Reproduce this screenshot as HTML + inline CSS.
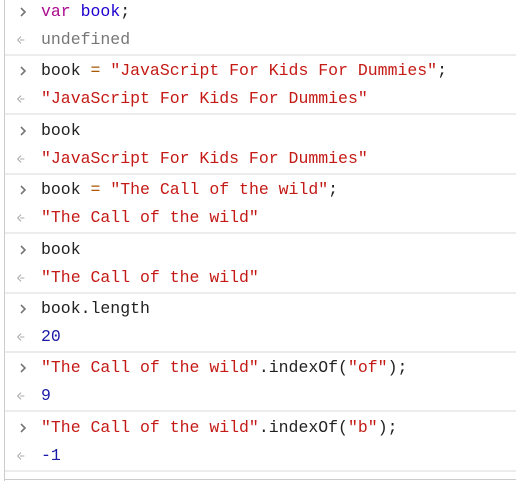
<!DOCTYPE html>
<html><head><style>
body{margin:0;width:516px;height:481px;background:#fff;position:relative;overflow:hidden;font-family:"Liberation Mono",monospace;}
.lb{position:absolute;left:4px;top:0;width:1px;height:481px;background:#ccc}
.sep{position:absolute;left:5px;right:0;height:2px;background:#ececec}
.bot{position:absolute;left:4px;right:0;top:479px;height:1px;background:#ccc}
.l{position:absolute;left:41px;height:28px;line-height:28px;font-size:16.5px;color:#222;white-space:pre}
.s{color:#c41a16}
.n{color:#1a1aa6}
.g{color:#777}
.a{position:absolute;left:19px;width:10px;height:28px}
</style></head><body>
<div class="lb"></div>
<div id="c"></div>
<script>
var g=[
['<span style="color:#aa0d91">var</span> <span style="color:#1c00cf">book</span>;','<span class="g">undefined</span>'],
['book <span style="color:#a85800">=</span> <span class="s">"JavaScript For Kids For Dummies"</span>;','<span class="s">"JavaScript For Kids For Dummies"</span>'],
['book','<span class="s">"JavaScript For Kids For Dummies"</span>'],
['book <span style="color:#a85800">=</span> <span class="s">"The Call of the wild"</span>;','<span class="s">"The Call of the wild"</span>'],
['book','<span class="s">"The Call of the wild"</span>'],
['book.length','<span class="n">20</span>'],
['<span class="s">"The Call of the wild"</span>.indexOf(<span class="s">"of"</span>);','<span class="n">9</span>'],
['<span class="s">"The Call of the wild"</span>.indexOf(<span class="s">"b"</span>);','<span class="n">-1</span>']];
var h='';
for(var i=0;i<g.length;i++){
 var t=i*59.4-4;
 h+='<svg class="a" style="top:'+(t+2)+'px;left:18px" viewBox="0 0 10 28"><path d="M3 10 L7 14 L3 18" stroke="#777" stroke-width="1.6" fill="none"/></svg>';
 h+='<div class="l" style="top:'+(t+2)+'px">'+g[i][0]+'</div>';
 h+='<svg class="a" style="top:'+(t+30)+'px;left:16px" viewBox="0 0 12 28"><path d="M6 10 L2 14 L6 18 M5 14 H10" stroke="#aaa" stroke-width="1.3" fill="none"/></svg>';
 h+='<div class="l" style="top:'+(t+30)+'px">'+g[i][1]+'</div>';
 h+='<div class="sep" style="top:'+(t+58)+'px"></div>';
}
document.getElementById('c').innerHTML=h;
</script>
<div class="bot"></div>
</body></html>
